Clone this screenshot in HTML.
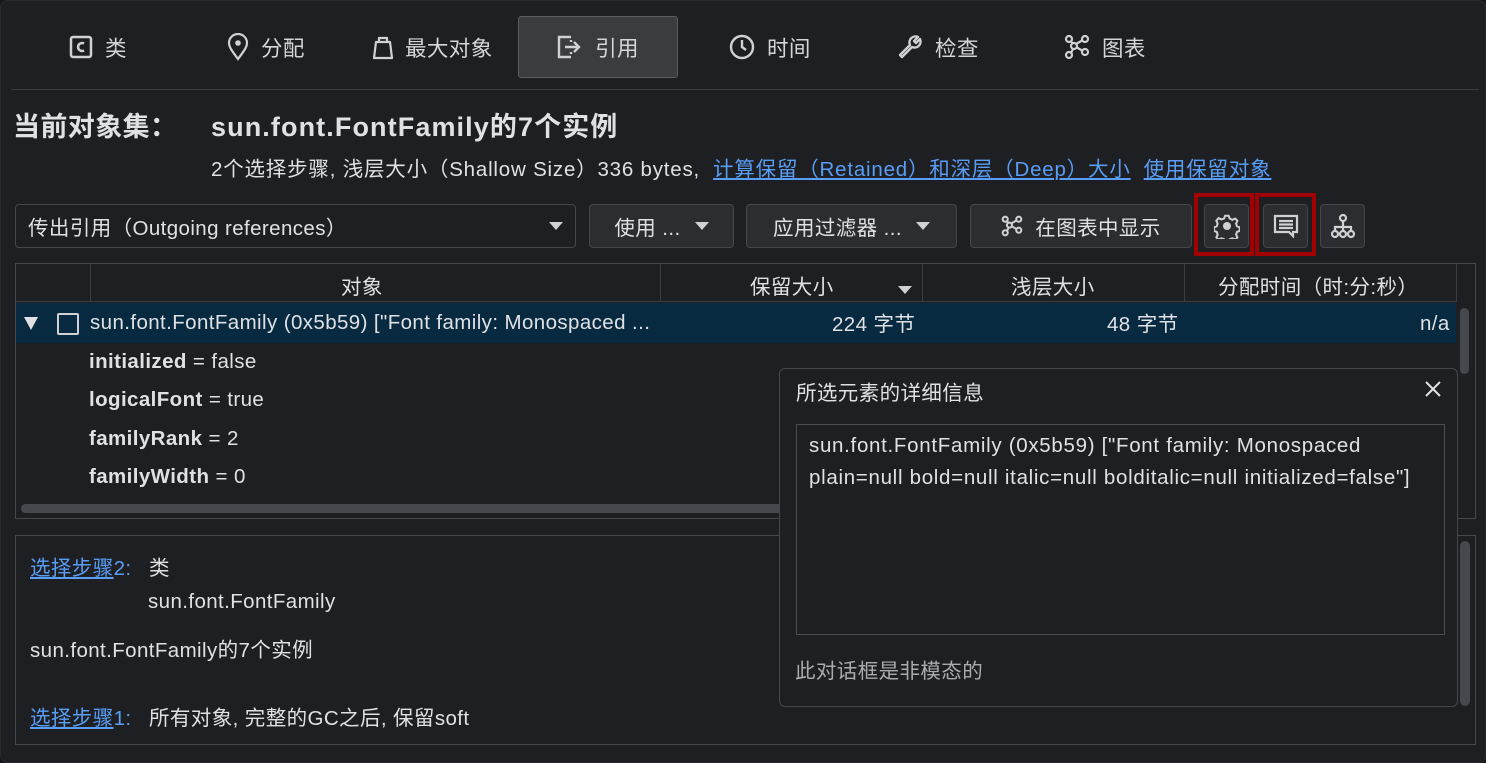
<!DOCTYPE html><html><head><meta charset="utf-8"><style>
*{box-sizing:border-box;margin:0;padding:0}
body{width:1486px;height:763px;background:#17181a;font-family:"Liberation Sans","Noto Sans CJK SC",sans-serif;color:#dfe1e5;font-size:20.5px;letter-spacing:0.4px;overflow:hidden;position:relative}
.a{position:absolute;white-space:nowrap}
#win{position:absolute;left:0;top:0;width:1486px;height:763px;background:#1e1f22;border-radius:8px;border:1px solid #2a2b2e}
.tab{position:absolute;top:15px;height:62px;display:flex;align-items:center;gap:12px;font-size:21.5px;color:#d4d6da}
.btn{position:absolute;background:#2b2d30;border:1px solid #45474b;border-radius:4px;display:flex;align-items:center;justify-content:center;color:#dfe1e5}
.tri{display:inline-block;width:0;height:0;border-left:7px solid transparent;border-right:7px solid transparent;border-top:8px solid #cfd1d5}
.link{color:#589df6;text-decoration:underline}
svg{display:block}
</style></head><body><div id="win">
<div class="tab" style="left:68px"><svg width="24" height="24" viewBox="0 0 24 24"><rect x="2" y="2" width="20" height="20" rx="2" fill="none" stroke="#cfd1d5" stroke-width="2.5"/><path d="M15 8.5a4 4 0 1 0 0 7" fill="none" stroke="#cfd1d5" stroke-width="2.5"/></svg>类</div>
<div class="tab" style="left:226px"><svg width="22" height="28" viewBox="0 0 22 28"><path d="M11 26C5 18 2 14 2 10a9 9 0 0 1 18 0c0 4-3 8-9 16z" fill="none" stroke="#cfd1d5" stroke-width="2.2"/><circle cx="11" cy="10" r="2.8" fill="#cfd1d5"/></svg>分配</div>
<div class="tab" style="left:372px"><svg width="20" height="26" viewBox="0 0 20 26"><path d="M6 8V4h8v4M3 8h14l2 16H1z" fill="none" stroke="#cfd1d5" stroke-width="2.2" stroke-linejoin="round"/></svg>最大对象</div>
<div class="tab" style="left:517px;width:160px;justify-content:center;background:#3b3c3f;border:1px solid #5a5c60;border-radius:3px"><svg width="26" height="24" viewBox="0 0 26 24"><path d="M14 2H2v20h12M14 7v-2M14 17v2" fill="none" stroke="#cfd1d5" stroke-width="2.4"/><path d="M8 12h14M17 7l5 5-5 5" fill="none" stroke="#cfd1d5" stroke-width="2.4"/></svg>引用</div>
<div class="tab" style="left:728px"><svg width="26" height="26" viewBox="0 0 26 26"><circle cx="13" cy="13" r="11" fill="none" stroke="#cfd1d5" stroke-width="2.4"/><path d="M13 6v7l4 3" fill="none" stroke="#cfd1d5" stroke-width="2.4"/></svg>时间</div>
<div class="tab" style="left:896px"><svg width="26" height="26" viewBox="0 0 26 26"><path d="M3 21l10-10a6 6 0 0 1 8-8l-4 4 2 2 4-4a6 6 0 0 1-8 8L5 23z" fill="none" stroke="#cfd1d5" stroke-width="2.4" stroke-linejoin="round"/></svg>检查</div>
<div class="tab" style="left:1063px"><svg width="26" height="26" viewBox="0 0 26 26" fill="none" stroke="#cfd1d5" stroke-width="2.2"><circle cx="5" cy="21" r="3"/><circle cx="10" cy="12" r="3"/><circle cx="21" cy="5" r="3"/><circle cx="21" cy="18" r="3"/><circle cx="5" cy="5" r="3"/><path d="M7 19l2-4M12 10l7-4M12 13l7 4M7 7l2 3"/></svg>图表</div>
<div class="a" style="left:10px;top:88px;width:1468px;height:1px;background:#3b3d40"></div>
<div class="a" style="left:12px;top:104px;font-size:27px;font-weight:bold">当前对象集：</div>
<div class="a" style="left:210px;top:104px;font-size:27px;font-weight:bold;letter-spacing:1.1px">sun.font.FontFamily的7个实例</div>
<div class="a" style="left:210px;top:151px;letter-spacing:0.8px">2个选择步骤, 浅层大小（Shallow Size）336 bytes,&nbsp; <span class="link">计算保留（Retained）和深层（Deep）大小</span>&nbsp; <span class="link">使用保留对象</span></div>
<div class="btn" style="left:14px;top:203px;width:561px;height:44px;justify-content:space-between;padding:0 12px;background:#1e1f22">传出引用（Outgoing references）<span class="tri"></span></div>
<div class="btn" style="left:588px;top:203px;width:145px;height:44px;gap:14px">使用 ... <span class="tri"></span></div>
<div class="btn" style="left:745px;top:203px;width:211px;height:44px;gap:14px">应用过滤器 ... <span class="tri"></span></div>
<div class="btn" style="left:969px;top:203px;width:222px;height:44px;gap:12px"><svg width="22" height="22" viewBox="0 0 26 26" fill="none" stroke="#cfd1d5" stroke-width="2.4"><circle cx="5" cy="21" r="3"/><circle cx="10" cy="12" r="3"/><circle cx="21" cy="5" r="3"/><circle cx="21" cy="18" r="3"/><circle cx="5" cy="5" r="3"/><path d="M7 19l2-4M12 10l7-4M12 13l7 4M7 7l2 3"/></svg>在图表中显示</div>
<div class="a" style="left:1193px;top:192px;width:60px;height:63px;border:4px solid #a30000"></div>
<div class="a" style="left:1254px;top:192px;width:61px;height:63px;border:4px solid #a30000"></div>
<div class="btn" style="left:1203px;top:203px;width:45px;height:44px"><svg width="26" height="26" viewBox="0 0 26 26"><path d="M11 2h4l1 3 3 1.5 3-1.5 2.5 2.5-1.5 3 1 3 3 1v4l-3 1-1 3 1.5 3-2.5 2.5-3-1.5-3 1-1 3h-4l-1-3-3-1-3 1.5-2.5-2.5 1.5-3-1-3-3-1v-4l3-1 1-3-1.5-3L4 4.5 7 6l3-1z" transform="scale(.92) translate(1 1)" fill="none" stroke="#cfd1d5" stroke-width="2.2" stroke-linejoin="round"/><circle cx="13" cy="13" r="4" fill="#cfd1d5"/></svg></div>
<div class="btn" style="left:1262px;top:203px;width:45px;height:44px"><svg width="26" height="24" viewBox="0 0 26 24" fill="none" stroke="#cfd1d5" stroke-width="2.2"><path d="M2 2h22v16h-4v4l-4-4H2z"/><path d="M6 7h14M6 10.5h14M6 14h14"/></svg></div>
<div class="btn" style="left:1319px;top:203px;width:45px;height:44px"><svg width="26" height="26" viewBox="0 0 26 26" fill="none" stroke="#cfd1d5" stroke-width="2.2"><circle cx="13" cy="5" r="3"/><circle cx="5" cy="21" r="3"/><circle cx="13" cy="21" r="3"/><circle cx="21" cy="21" r="3"/><path d="M13 8v10M5 18v-4h16v4"/></svg></div>
<!-- table -->
<div class="a" style="left:14px;top:262px;width:1461px;height:256px;border:1px solid #45474b;overflow:hidden">
<div class="a" style="left:0;top:0;width:1440px;height:38px;border-bottom:1px solid #3b3d40;background:#1e1f22"></div>
<div class="a" style="left:74px;top:0;width:1px;height:38px;background:#3b3d40"></div>
<div class="a" style="left:644px;top:0;width:1px;height:38px;background:#3b3d40"></div>
<div class="a" style="left:906px;top:0;width:1px;height:38px;background:#3b3d40"></div>
<div class="a" style="left:1168px;top:0;width:1px;height:38px;background:#3b3d40"></div>
<div class="a" style="left:1440px;top:0;width:1px;height:38px;background:#3b3d40"></div>
<div class="a" style="left:325px;top:6px">对象</div>
<div class="a" style="left:734px;top:6px">保留大小</div>
<div class="a" style="left:882px;top:12px"><span class="tri"></span></div>
<div class="a" style="left:995px;top:6px">浅层大小</div>
<div class="a" style="left:1202px;top:6px">分配时间（时:分:秒）</div>
<div class="a" style="left:0;top:39px;width:1440px;height:40px;background:#082a40"></div>
<div class="a" style="left:8px;top:53px;width:0;height:0;border-left:7px solid transparent;border-right:7px solid transparent;border-top:13px solid #dfe1e5"></div>
<div class="a" style="left:41px;top:49px;width:22px;height:22px;border:2px solid #cfd1d5;border-radius:2px"></div>
<div class="a" style="left:74px;top:47px">sun.font.FontFamily (0x5b59) ["Font family: Monospaced ...</div>
<div class="a" style="left:816px;top:43px">224 字节</div>
<div class="a" style="left:1091px;top:43px">48 字节</div>
<div class="a" style="left:1404px;top:48px">n/a</div>
<div class="a" style="left:73px;top:86px"><b>initialized</b> = false</div>
<div class="a" style="left:73px;top:124px"><b>logicalFont</b> = true</div>
<div class="a" style="left:73px;top:163px"><b>familyRank</b> = 2</div>
<div class="a" style="left:73px;top:201px"><b>familyWidth</b> = 0</div>
<div class="a" style="left:5px;top:240px;width:1430px;height:9px;border-radius:5px;background:#45484c"></div>
<div class="a" style="left:1444px;top:44px;width:9px;height:66px;border-radius:5px;background:#45484c"></div>
</div>
<!-- bottom panel -->
<div class="a" style="left:14px;top:534px;width:1461px;height:210px;border:1px solid #45474b"></div>
<div class="a" style="left:1459px;top:540px;width:10px;height:165px;border-radius:5px;background:#45484c"></div>
<div class="a" style="left:29px;top:550px"><span class="link">选择步骤</span><span style="color:#589df6">2:</span></div>
<div class="a" style="left:148px;top:550px">类</div>
<div class="a" style="left:147px;top:589px">sun.font.FontFamily</div>
<div class="a" style="left:29px;top:632px">sun.font.FontFamily的7个实例</div>
<div class="a" style="left:29px;top:700px"><span class="link">选择步骤</span><span style="color:#589df6">1:</span></div>
<div class="a" style="left:148px;top:700px">所有对象, 完整的GC之后, 保留soft</div>
<!-- dialog -->
<div class="a" style="left:778px;top:367px;width:679px;height:339px;background:#1e1f22;border:1px solid #45474b;border-radius:6px"></div>
<div class="a" style="left:795px;top:375px">所选元素的详细信息</div>
<svg class="a" style="left:1423px;top:379px" width="18" height="18" viewBox="0 0 18 18"><path d="M2 2l14 14M16 2L2 16" stroke="#dfe1e5" stroke-width="2"/></svg>
<div class="a" style="left:795px;top:423px;width:649px;height:211px;border:1px solid #4a4c50"></div>
<div class="a" style="left:808px;top:429px;line-height:32px;letter-spacing:0.7px">sun.font.FontFamily (0x5b59) ["Font family: Monospaced<br>plain=null bold=null italic=null bolditalic=null initialized=false"]</div>
<div class="a" style="left:794px;top:653px;color:#a9abaf">此对话框是非模态的</div>
</div></body></html>
